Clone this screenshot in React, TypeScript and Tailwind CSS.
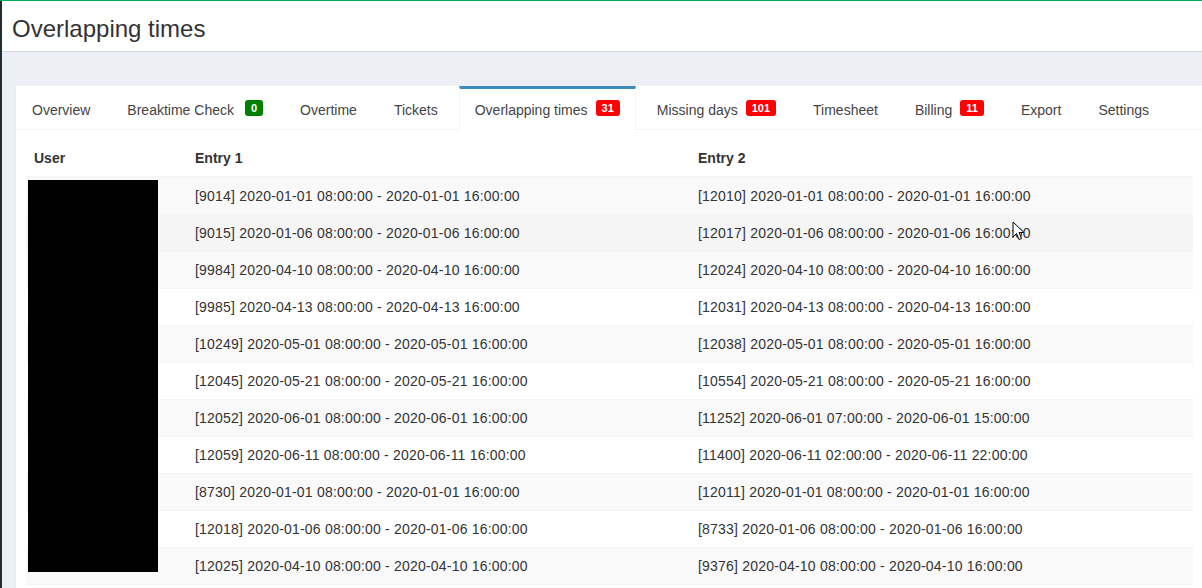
import React from 'react';

type Tab = { label: string; badge?: string; badgeColor?: string; gap?: string; active?: boolean };

const tabs: Tab[] = [
  { label: 'Overview' },
  { label: 'Breaktime Check', badge: '0', badgeColor: 'bg-[#008000]', gap: 'ml-[11px]' },
  { label: 'Overtime' },
  { label: 'Tickets' },
  { label: 'Overlapping times', badge: '31', badgeColor: 'bg-[#f00]', gap: 'ml-[8px]', active: true },
  { label: 'Missing days', badge: '101', badgeColor: 'bg-[#f00]', gap: 'ml-[8px]' },
  { label: 'Timesheet' },
  { label: 'Billing', badge: '11', badgeColor: 'bg-[#f00]', gap: 'ml-[8px]' },
  { label: 'Export' },
  { label: 'Settings' },
];

const rows: [string, string][] = [
  ['[9014] 2020-01-01 08:00:00 - 2020-01-01 16:00:00', '[12010] 2020-01-01 08:00:00 - 2020-01-01 16:00:00'],
  ['[9015] 2020-01-06 08:00:00 - 2020-01-06 16:00:00', '[12017] 2020-01-06 08:00:00 - 2020-01-06 16:00:00'],
  ['[9984] 2020-04-10 08:00:00 - 2020-04-10 16:00:00', '[12024] 2020-04-10 08:00:00 - 2020-04-10 16:00:00'],
  ['[9985] 2020-04-13 08:00:00 - 2020-04-13 16:00:00', '[12031] 2020-04-13 08:00:00 - 2020-04-13 16:00:00'],
  ['[10249] 2020-05-01 08:00:00 - 2020-05-01 16:00:00', '[12038] 2020-05-01 08:00:00 - 2020-05-01 16:00:00'],
  ['[12045] 2020-05-21 08:00:00 - 2020-05-21 16:00:00', '[10554] 2020-05-21 08:00:00 - 2020-05-21 16:00:00'],
  ['[12052] 2020-06-01 08:00:00 - 2020-06-01 16:00:00', '[11252] 2020-06-01 07:00:00 - 2020-06-01 15:00:00'],
  ['[12059] 2020-06-11 08:00:00 - 2020-06-11 16:00:00', '[11400] 2020-06-11 02:00:00 - 2020-06-11 22:00:00'],
  ['[8730] 2020-01-01 08:00:00 - 2020-01-01 16:00:00', '[12011] 2020-01-01 08:00:00 - 2020-01-01 16:00:00'],
  ['[12018] 2020-01-06 08:00:00 - 2020-01-06 16:00:00', '[8733] 2020-01-06 08:00:00 - 2020-01-06 16:00:00'],
  ['[12025] 2020-04-10 08:00:00 - 2020-04-10 16:00:00', '[9376] 2020-04-10 08:00:00 - 2020-04-10 16:00:00'],
];

export default function App() {
  return (
    <div className="w-[1202px] h-[588px] overflow-hidden bg-[#ecf0f5] font-['Liberation_Sans',Arial,sans-serif] text-[14px] text-[#333]">
      {/* top accent line */}
      <div className="h-px bg-[#00a65a]" />
      <div className="flex h-[587px]">
        {/* sidebar edge */}
        <div className="w-[2px] bg-[#222d32] shrink-0" />
        <div className="flex-1 min-w-0">
          {/* page header */}
          <div className="h-[51px] bg-white border-b border-[#d8dce2] pl-[10px] pt-[15px]">
            <h1 className="text-[24px] leading-[26px] text-[#333]">Overlapping times</h1>
          </div>

          <div className="pl-[14px] pt-[34px]">
            <div className="w-[1187px] bg-white shadow-[0_1px_1px_rgba(0,0,0,0.1)]">
              {/* tabs */}
              <ul className="flex border-b border-[#f4f4f4]">
                {tabs.map((t) => (
                  <li key={t.label} className="mr-[5px] -mb-px">
                    <a
                      className={
                        'flex items-start h-[44px] px-[15px] pt-[11px] border-t-[3px] border-x text-[#444] leading-[20px] ' +
                        (t.active ? 'border-t-[#3c8dbc] border-x-[#f4f4f4] bg-white' : 'border-t-transparent border-x-transparent')
                      }
                    >
                      <span>{t.label}</span>
                      {t.badge && (
                        <span
                          className={`${t.badgeColor} ${t.gap} mt-[0px] h-[16px] px-[6px] rounded-[3px] text-white font-bold text-[11px] leading-[16px]`}
                        >
                          {t.badge}
                        </span>
                      )}
                    </a>
                  </li>
                ))}
              </ul>

              {/* table */}
              <div className="p-[10px] pb-0">
                <div className="relative">
                  <table className="w-[1167px] border-collapse table-fixed">
                    <colgroup>
                      <col className="w-[161px]" />
                      <col className="w-[503px]" />
                      <col className="w-[503px]" />
                    </colgroup>
                    <thead>
                      <tr className="border-b-2 border-[#f4f4f4]">
                        <th className="text-left font-bold px-[8px] py-[8px] leading-[20px]">User</th>
                        <th className="text-left font-bold px-[8px] py-[8px] leading-[20px]">Entry 1</th>
                        <th className="text-left font-bold px-[8px] py-[8px] leading-[20px]">Entry 2</th>
                      </tr>
                    </thead>
                    <tbody>
                      {rows.map((r, i) => (
                        <tr
                          key={i}
                          className={
                            'border-t border-[#f4f4f4] ' +
                            (i === 1 ? 'bg-[#f5f5f5]' : i % 2 === 0 ? 'bg-[#f9f9f9]' : 'bg-white')
                          }
                        >
                          <td className="px-[8px] py-[8px] leading-[20px]"></td>
                          <td className="px-[8px] py-[8px] leading-[20px] tracking-[0.2px]">{r[0]}</td>
                          <td className="px-[8px] py-[8px] leading-[20px] tracking-[0.2px]">{r[1]}</td>
                        </tr>
                      ))}
                      <tr className="border-t border-[#f4f4f4] bg-white">
                        <td className="h-[37px]" colSpan={3}></td>
                      </tr>
                    </tbody>
                  </table>
                  {/* redacted user cell */}
                  <div className="absolute left-[2px] top-[40px] w-[130px] h-[392px] bg-black" />
                  {/* mouse cursor */}
                  <svg className="absolute left-[986px] top-[81px]" width="14" height="20" viewBox="0 0 14 20">
                    <path d="M1 1 L1 16 L4.5 12.5 L7 18.5 L9.5 17.5 L7 11.5 L12 11.5 Z" fill="#fff" stroke="#000" strokeWidth="1" strokeLinejoin="round" />
                  </svg>
                </div>
              </div>
            </div>
          </div>
        </div>
      </div>
    </div>
  );
}
